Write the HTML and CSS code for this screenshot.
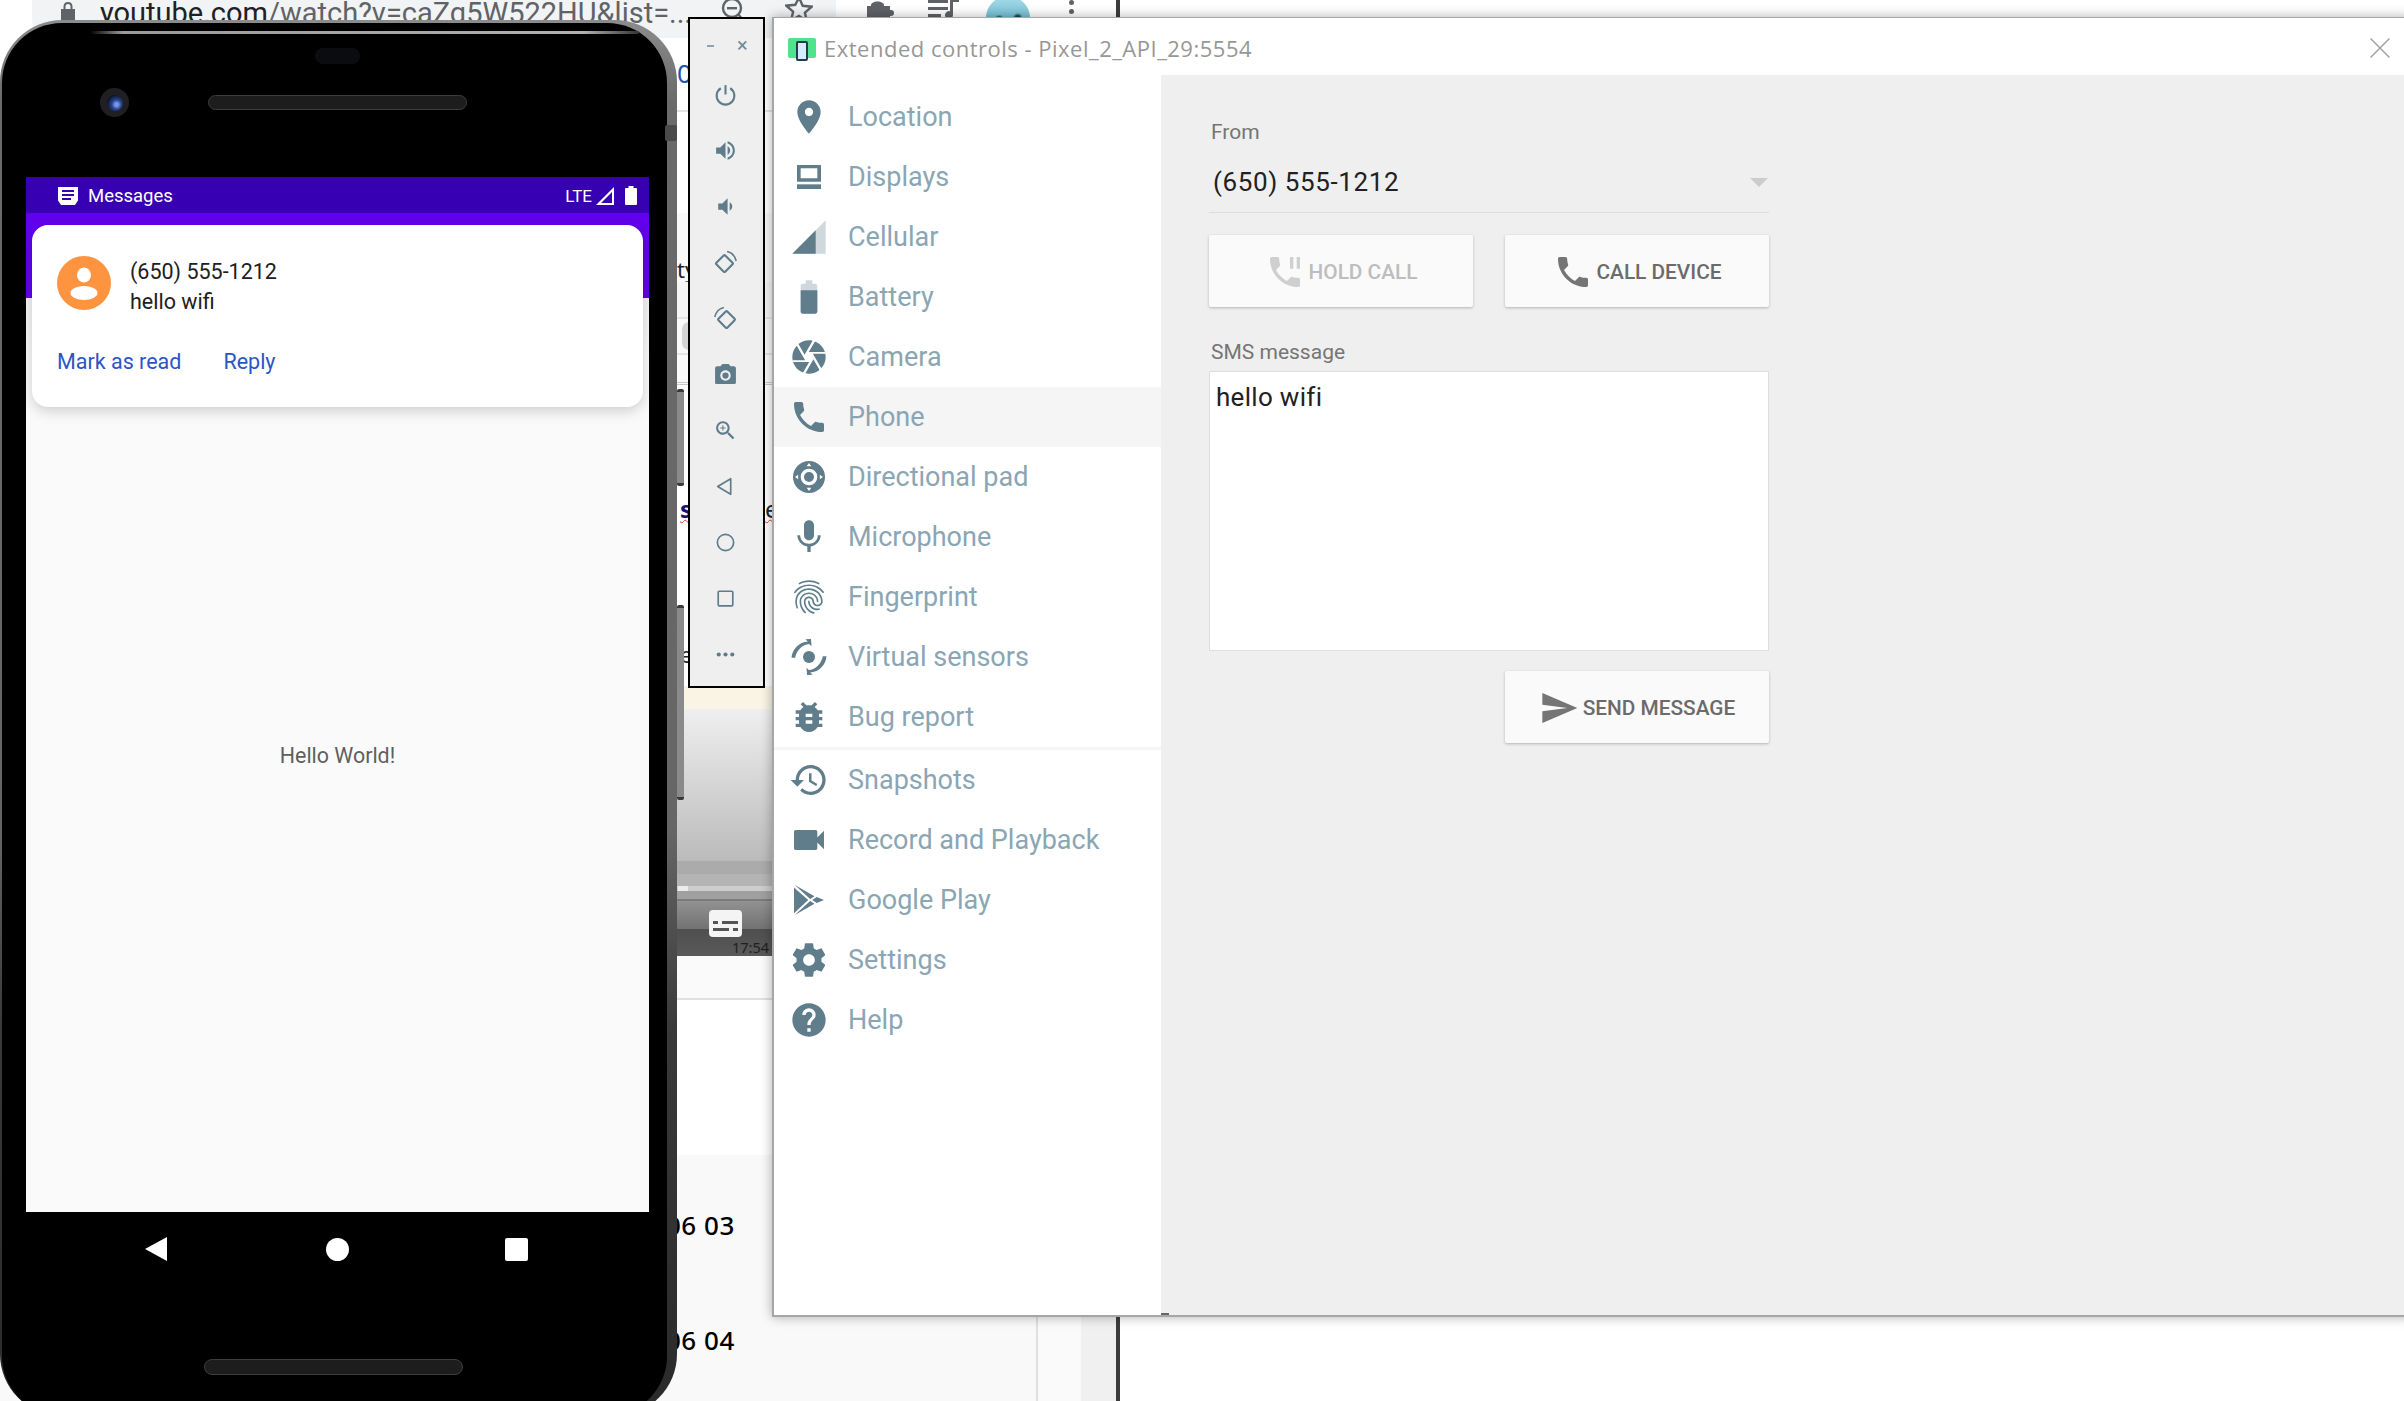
FILE: index.html
```html
<!DOCTYPE html>
<html lang="en">
<head>
<meta charset="utf-8">
<title>Extended controls</title>
<link rel="stylesheet" href="styles.css">
</head>
<body>
<div class="desktop">

  <div class="browser">
    <div class="browser-main">
      <div class="chrome">
        <div class="omnibox">
          <svg class="lock" viewBox="0 0 16 20"><path d="M8 0C5 0 3.500 2 3.500 4.500V7H1v13h14V7h-2.500V4.500C12.500 2 11 0 8 0zm0 2c1.600 0 2.500 1 2.500 2.500V7h-5V4.500C5.500 3 6.400 2 8 2z"/></svg>
          <span class="url"><b>youtube.com</b>/watch?v=caZg5W522HU&amp;list=...</span>
          <svg class="zoomout" viewBox="0 0 24 24"><circle cx="11" cy="9" r="9" fill="none" stroke="#5f6368" stroke-width="2.400"/><path d="M6 8h10v2.400H6z" fill="#5f6368"/><path d="M17 15l5 6" stroke="#5f6368" stroke-width="2.400"/></svg>
          <svg class="star" viewBox="0 0 28 26"><path d="M14 1.500l3.700 8.300 9 .9-6.800 6 2 8.800L14 20l-7.900 4.500 2-8.800-6.800-6 9-.9z" fill="none" stroke="#5f6368" stroke-width="2.400"/></svg>
        </div>
        <div class="ext-icons">
          <svg class="puzzle" viewBox="0 0 28 20"><path d="M0 6h4C3 0 18 0 17 6h6v4h1a3 3 0 0 1 0 6h-1v4H0z" fill="#5f6368"/></svg>
          <svg class="playlist" viewBox="0 0 32 20"><path d="M0 1h20v3H0zM0 8h20v3H0zM0 15h13v3H0zM22 0h9v3h-6v13a4 4 0 1 1-3-3.800z" fill="#5f6368"/></svg>
          <span class="avatar"></span>
          <span class="kebab"><i></i><i></i><i></i></span>
        </div>
      </div>

      <div class="page-row row-a"><span class="frag-blue">0.</span></div>
      <div class="page-row row-b"></div>
      <div class="page-row row-c"><span class="frag">ty</span></div>
      <div class="page-row row-d"></div>
      <div class="page-row row-e"><span class="chip"></span></div>
      <div class="page-row row-f"></div>
      <div class="page-row row-g"><span class="frag-spell">s</span><span class="frag-spell-b">e</span></div>
      <div class="page-row row-h"><span class="frag">e</span></div>
      <div class="page-row row-cream"></div>

      <div class="video">
        <div class="video-fade"></div>
        <div class="video-band-a"></div>
        <div class="video-band-b"></div>
        <div class="video-progress"><span></span></div>
        <div class="video-band-c"></div>
        <div class="video-controls">
          <span class="cc"><i class="cc-a"></i><i class="cc-b"></i><i class="cc-c"></i><i class="cc-d"></i></span>
          <span class="video-time">17:54</span>
        </div>
      </div>

      <div class="page-row row-i"></div>
      <div class="page-row row-j"></div>

      <div class="table">
        <div class="table-main">
          <div class="table-row">06 03</div>
          <div class="table-row">06 04</div>
        </div>
        <div class="table-side"></div>
      </div>
    </div>
    <div class="browser-edge"></div>
    <div class="browser-right"></div>
  </div>

  <div class="phone">
    <span class="phone-face"></span>
    <span class="phone-gloss"></span>
    <span class="side-btn side-a"></span>
    <span class="side-btn side-b"></span>
    <span class="side-btn side-c"></span>
    <div class="phone-top">
      <span class="sensor"></span>
      <div class="top-row">
        <span class="lens"><span class="lens-glass"></span></span>
        <span class="speaker"></span>
      </div>
    </div>
    <div class="screen">
      <div class="status">
        <div class="status-left">
          <svg class="status-app" viewBox="0 0 20 18"><path d="M0 0h20v13.500L17 18H3l-3-4.500zM4 3v2h12V3zm0 4v2h12V7zm0 4v2h9v-2z" fill="#fff" fill-rule="evenodd"/></svg>
          <span class="status-title">Messages</span>
        </div>
        <div class="status-right">
          <span class="lte">LTE</span>
          <svg class="status-signal" viewBox="0 0 18 18"><path d="M18 0v18H0zM16 5L5 16h11z" fill="#fff" fill-rule="evenodd"/></svg>
          <svg class="status-batt" viewBox="0 0 12 19"><path d="M3.500 0h5v2H11a1 1 0 0 1 1 1v15a1 1 0 0 1-1 1H1a1 1 0 0 1-1-1V3a1 1 0 0 1 1-1h2.500z" fill="#fff"/></svg>
        </div>
      </div>
      <div class="appbar"></div>
      <div class="screen-body">Hello World!</div>
      <div class="heads-up">
        <div class="hu-main">
          <svg class="hu-avatar" viewBox="0 0 54 54"><circle cx="27" cy="27" r="27" fill="#fe9340"/><ellipse cx="27" cy="19" rx="7" ry="7.500" fill="#fff"/><ellipse cx="27" cy="37" rx="13.500" ry="7" fill="#fff"/></svg>
          <div class="hu-text">
            <div class="hu-line">(650) 555-1212</div>
            <div class="hu-line">hello wifi</div>
          </div>
        </div>
        <div class="hu-actions"><span>Mark as read</span><span>Reply</span></div>
      </div>
    </div>
    <div class="navbar">
      <svg class="nav-back" viewBox="0 0 22 24"><path d="M22 0v24L0 12z" fill="#fff"/></svg>
      <span class="nav-home"></span>
      <span class="nav-recent"></span>
    </div>
    <span class="speaker speaker-bottom"></span>
  </div>

  <div class="toolbar">
    <div class="tb-head"><span class="tb-min"></span><span class="tb-close">×</span></div>
    <div class="tb-btn"><svg class="tb-icon" viewBox="0 0 24 24"><path d="M12 3v9" fill="none" stroke="#5f7c8a" stroke-width="2"/><path d="M7.500 6a8.500 8.500 0 1 0 9 0" fill="none" stroke="#5f7c8a" stroke-width="2"/></svg></div>
    <div class="tb-btn"><svg class="tb-icon" viewBox="0 0 24 24"><path d="M3 9v6h4l5 5V4L7 9H3zm13.500 3c0-1.770-1.020-3.290-2.500-4.030v8.050c1.480-.73 2.500-2.250 2.500-4.020zM14 3.230v2.060c2.890.86 5 3.540 5 6.710s-2.110 5.850-5 6.710v2.060c4.010-.91 7-4.490 7-8.770s-2.990-7.860-7-8.770z"/></svg></div>
    <div class="tb-btn"><svg class="tb-icon" viewBox="0 0 24 24"><path d="M18.500 12c0-1.770-1.020-3.290-2.500-4.030v8.050c1.480-.73 2.500-2.250 2.500-4.020zM5 9v6h4l5 5V4L9 9H5z"/></svg></div>
    <div class="tb-btn"><svg class="tb-icon" viewBox="0 0 24 24"><rect x="5" y="7" width="12" height="12" rx="1" transform="rotate(45 11 13)" fill="none" stroke="#5f7c8a" stroke-width="2"/><path d="M13.500 1.500c4 .8 7.600 4.400 8.800 9" fill="none" stroke="#5f7c8a" stroke-width="1.500"/></svg></div>
    <div class="tb-btn"><svg class="tb-icon" viewBox="0 0 24 24"><rect x="7" y="7" width="12" height="12" rx="1" transform="rotate(45 13 13)" fill="none" stroke="#5f7c8a" stroke-width="2"/><path d="M10.500 1.500c-4 .8-7.600 4.400-8.800 9" fill="none" stroke="#5f7c8a" stroke-width="1.500"/></svg></div>
    <div class="tb-btn"><svg class="tb-icon" viewBox="0 0 24 24"><path d="M9 2L7.170 4H4c-1.100 0-2 .9-2 2v14c0 1.100.9 1 2 1h16c1.100 0 2 .1 2-1V6c0-1.100-.9-2-2-2h-3.170L15 2H9zm3 16c-2.760 0-5-2.240-5-5s2.240-5 5-5 5 2.240 5 5-2.240 5-5 5z"/><circle cx="12" cy="13" r="3"/></svg></div>
    <div class="tb-btn"><svg class="tb-icon" viewBox="0 0 24 24"><path d="M15.500 14h-.79l-.28-.27C15.410 12.590 16 11.110 16 9.500 16 5.910 13.090 3 9.500 3S3 5.910 3 9.500 5.910 16 9.500 16c1.610 0 3.090-.59 4.230-1.570l.27.28v.79l5 4.990L20.490 19l-4.990-5zm-6 0C7.010 14 5 11.990 5 9.500S7.010 5 9.500 5 14 7.010 14 9.500 11.990 14 9.500 14zM12 10h-2v2H9v-2H7V9h2V7h1v2h2v1z"/></svg></div>
    <div class="tb-btn"><svg class="tb-icon" viewBox="0 0 24 24"><path d="M17 4.500v15L4.500 12z" fill="none" stroke="#5f7c8a" stroke-width="1.600" stroke-linejoin="round"/></svg></div>
    <div class="tb-btn"><svg class="tb-icon" viewBox="0 0 24 24"><circle cx="12" cy="12" r="7.800" fill="none" stroke="#5f7c8a" stroke-width="1.600"/></svg></div>
    <div class="tb-btn"><svg class="tb-icon" viewBox="0 0 24 24"><rect x="5" y="5" width="14" height="14" rx="1" fill="none" stroke="#5f7c8a" stroke-width="1.600"/></svg></div>
    <div class="tb-btn"><svg class="tb-icon" viewBox="0 0 24 24"><circle cx="5.500" cy="12" r="2"/><circle cx="12" cy="12" r="2"/><circle cx="18.500" cy="12" r="2"/></svg></div>
  </div>

  <div class="window">
    <div class="titlebar">
      <div class="title-left">
        <span class="logo"><span class="logo-phone"></span></span>
        <span class="title-text">Extended controls - Pixel_2_API_29:5554</span>
      </div>
      <svg class="title-close" viewBox="0 0 20 20"><path d="M.5.500l19 19M19.500.500l-19 19" stroke="#a3a3a3" stroke-width="1.500" fill="none"/></svg>
    </div>
    <div class="win-body">
      <nav class="menu">
        <div class="menu-item"><svg class="menu-icon" viewBox="0 0 24 24"><path d="M12 2C8.130 2 5 5.130 5 9c0 5.250 7 13 7 13s7-7.750 7-13c0-3.870-3.130-7-7-7zm0 9.500c-1.380 0-2.500-1.120-2.500-2.500s1.120-2.500 2.500-2.500 2.500 1.120 2.500 2.500-1.120 2.500-2.500 2.500z"/></svg><span>Location</span></div>
        <div class="menu-item"><svg class="menu-icon" viewBox="0 0 24 24"><path fill-rule="evenodd" d="M4.800 4.800h14.400v10H4.800zM7 6.800v6h10v-6z"/><path d="M4.800 16.400h14.400v2.800H4.800z"/></svg><span>Displays</span></div>
        <div class="menu-item"><svg class="menu-icon" viewBox="0 0 24 24"><path opacity=".3" d="M2 22h20V2z"/><path d="M16 8L2 22h14z"/></svg><span>Cellular</span></div>
        <div class="menu-item"><svg class="menu-icon" viewBox="0 0 24 24"><path opacity=".3" d="M15.670 4H14V2h-4v2H8.330C7.600 4 7 4.600 7 5.330v15.340C7 21.400 7.600 22 8.330 22h7.340c.73 0 1.330-.6 1.330-1.330V5.330C17 4.600 16.400 4 15.670 4z"/><path d="M7 8h10v12.670c0 .73-.6 1.330-1.330 1.330H8.330C7.600 22 7 21.400 7 20.670z"/></svg><span>Battery</span></div>
        <div class="menu-item"><svg class="menu-icon" viewBox="0 0 24 24"><path d="M9.400 10.500l4.770-8.260C13.470 2.090 12.750 2 12 2c-2.400 0-4.600.85-6.320 2.250l3.660 6.350.06-.1zM21.540 9c-.92-2.920-3.150-5.260-6-6.340L11.880 9h9.660zm.26 1h-7.490l.29.5 4.760 8.250C21 16.970 22 14.610 22 12c0-.69-.07-1.350-.2-2zM8.540 12l-3.900-6.750C3.010 7.030 2 9.390 2 12c0 .69.07 1.350.2 2h7.490l-1.150-2zm-6.080 3c.92 2.920 3.150 5.260 6 6.340L12.120 15H2.460zm11.270 0l-3.900 6.760c.7.15 1.420.24 2.170.24 2.400 0 4.600-.85 6.320-2.250l-3.660-6.350-.93 1.600z"/></svg><span>Camera</span></div>
        <div class="menu-item is-active"><svg class="menu-icon" viewBox="0 0 24 24"><path d="M6.620 10.790c1.440 2.830 3.760 5.140 6.590 6.590l2.200-2.200c.27-.27.67-.36 1.020-.24 1.120.37 2.330.57 3.570.57.55 0 1 .45 1 1V20c0 .55-.45 1-1 1-9.390 0-17-7.610-17-17 0-.55.45-1 1-1h3.500c.55 0 1 .45 1 1 0 1.250.2 2.450.57 3.570.11.350.03.740-.25 1.020l-2.200 2.200z"/></svg><span>Phone</span></div>
        <div class="menu-item"><svg class="menu-icon" viewBox="0 0 24 24"><circle cx="12" cy="12" r="9.600"/><circle cx="12" cy="12" r="5" fill="#fff"/><circle cx="12" cy="12" r="3"/><path fill="#fff" d="M12 3.600l1.400 1.900h-2.800zM12 20.400l-1.400-1.900h2.800zM3.600 12l1.900-1.400v2.800zM20.400 12l-1.900 1.400v-2.800z"/></svg><span>Directional pad</span></div>
        <div class="menu-item"><svg class="menu-icon" viewBox="0 0 24 24"><path d="M12 14c1.660 0 2.990-1.340 2.990-3L15 5c0-1.660-1.340-3-3-3S9 3.340 9 5v6c0 1.660 1.340 3 3 3zm5.300-3c0 3-2.540 5.100-5.300 5.100S6.700 14 6.700 11H5c0 3.410 2.720 6.230 6 6.720V21h2v-3.280c3.280-.48 6-3.300 6-6.720h-1.700z"/></svg><span>Microphone</span></div>
        <div class="menu-item"><svg class="menu-icon" viewBox="0 0 24 24"><path d="M17.810 4.470c-.08 0-.16-.02-.23-.06C15.660 3.420 14 3 12.010 3c-1.980 0-3.860.47-5.570 1.410-.24.130-.54.040-.68-.2-.13-.24-.04-.55.2-.68C7.820 2.520 9.860 2 12.010 2c2.130 0 3.990.47 6.030 1.520.25.130.34.430.21.670-.09.180-.26.280-.44.280zM3.500 9.720c-.1 0-.2-.03-.29-.09-.23-.16-.28-.47-.12-.7.990-1.400 2.250-2.500 3.750-3.270C9.980 4.040 14 4.030 17.150 5.650c1.500.77 2.760 1.860 3.750 3.250.16.220.11.540-.12.700-.23.160-.54.110-.7-.12-.9-1.260-2.040-2.250-3.390-2.940-2.870-1.470-6.540-1.470-9.400.01-1.360.7-2.500 1.700-3.400 2.960-.08.140-.23.210-.39.210zm6.250 12.070c-.13 0-.26-.05-.35-.15-.87-.87-1.340-1.430-2.010-2.640-.69-1.230-1.050-2.730-1.050-4.340 0-2.970 2.540-5.390 5.660-5.390s5.660 2.420 5.660 5.390c0 .28-.22.5-.5.5s-.5-.22-.5-.5c0-2.420-2.090-4.390-4.660-4.390-2.570 0-4.660 1.970-4.660 4.390 0 1.440.32 2.770.93 3.850.64 1.150 1.080 1.640 1.850 2.420.19.200.19.510 0 .71-.11.100-.24.150-.37.150zm7.170-1.850c-1.190 0-2.240-.3-3.100-.89-1.490-1.010-2.380-2.650-2.380-4.390 0-.28.220-.5.500-.5s.5.220.5.500c0 1.410.72 2.740 1.940 3.560.71.480 1.540.71 2.540.71.240 0 .64-.03 1.040-.1.270-.05.530.13.580.41.050.27-.13.530-.41.580-.57.110-1.070.12-1.210.12zM14.910 22c-.04 0-.09-.01-.13-.02-1.590-.44-2.630-1.030-3.720-2.100-1.400-1.390-2.170-3.240-2.170-5.220 0-1.620 1.380-2.940 3.080-2.940 1.700 0 3.080 1.320 3.080 2.940 0 1.070.93 1.940 2.080 1.940s2.080-.87 2.080-1.940c0-3.770-3.250-6.830-7.250-6.830-2.840 0-5.440 1.580-6.610 4.030-.39.810-.59 1.760-.59 2.800 0 .78.07 2.010.67 3.610.1.260-.03.550-.29.640-.26.100-.55-.04-.64-.29-.49-1.310-.73-2.610-.73-3.960 0-1.200.23-2.290.68-3.240 1.330-2.790 4.280-4.600 7.510-4.600 4.550 0 8.250 3.510 8.250 7.830 0 1.620-1.380 2.940-3.080 2.940s-3.080-1.320-3.080-2.940c0-1.070-.93-1.940-2.080-1.940s-2.080.87-2.080 1.940c0 1.710.66 3.310 1.870 4.510.95.940 1.860 1.460 3.270 1.850.27.070.42.350.35.610-.05.230-.26.380-.47.380z"/></svg><span>Fingerprint</span></div>
        <div class="menu-item"><svg class="menu-icon" viewBox="0 0 24 24"><circle cx="12" cy="12" r="3.600"/><path d="M1.500 12.500C1.800 7.500 6 3 11.300 2.700l-1.500-1.300 3.400-.2.300 4.300-1.400-1.300C8 4.500 4.600 8 3.700 12.500zM22.500 11.500c-.3 5-4.500 9.500-9.800 9.800l1.500 1.300-3.400.2-.3-4.300 1.400 1.300c4.100-.3 7.500-3.800 8.400-8.300z"/></svg><span>Virtual sensors</span></div>
        <div class="menu-item"><svg class="menu-icon" viewBox="0 0 24 24"><path d="M20 8h-2.810c-.45-.78-1.070-1.450-1.820-1.960L17 4.410 15.590 3l-2.170 2.170C12.960 5.060 12.490 5 12 5c-.49 0-.96.06-1.410.17L8.410 3 7 4.410l1.620 1.630C7.880 6.550 7.260 7.220 6.810 8H4v2h2.090c-.05.33-.09.66-.09 1v1H4v2h2v1c0 .34.04.67.09 1H4v2h2.810c1.040 1.790 2.970 3 5.190 3s4.150-1.210 5.190-3H20v-2h-2.090c.05-.33.09-.66.09-1v-1h2v-2h-2v-1c0-.34-.04-.67-.09-1H20V8zm-6 8h-4v-2h4v2zm0-4h-4v-2h4v2z"/></svg><span>Bug report</span></div>
        <div class="menu-divider"></div>
        <div class="menu-item"><svg class="menu-icon" viewBox="0 0 24 24"><path d="M13 3c-4.970 0-9 4.030-9 9H1l3.890 3.890.07.14L9 12H6c0-3.870 3.130-7 7-7s7 3.130 7 7-3.130 7-7 7c-1.930 0-3.680-.79-4.940-2.060l-1.420 1.420C8.270 19.990 10.510 21 13 21c4.970 0 9-4.030 9-9s-4.030-9-9-9zm-1 5v5l4.280 2.540.72-1.210-3.500-2.080V8H12z"/></svg><span>Snapshots</span></div>
        <div class="menu-item"><svg class="menu-icon" viewBox="0 0 24 24"><path d="M17 10.500V7c0-.55-.45-1-1-1H4c-.55 0-1 .45-1 1v10c0 .55.45 1 1 1h12c.55 0 1-.45 1-1v-3.500l4 4v-11l-4 4z"/></svg><span>Record and Playback</span></div>
        <div class="menu-item"><svg class="menu-icon" viewBox="0 0 24 24"><path d="M3 4.500L11.500 12 3 20zM3.500 3l11.800 6.800-2.600 1.600zM3.500 21l11.800-6.800-2.600-1.600zM16.600 10.200L21 12l-4.400 1.800L14 12z"/></svg><span>Google Play</span></div>
        <div class="menu-item"><svg class="menu-icon" viewBox="0 0 24 24"><path d="M19.430 12.980c.04-.32.07-.64.07-.98s-.03-.66-.07-.98l2.110-1.650c.19-.15.24-.42.12-.64l-2-3.460c-.12-.22-.39-.3-.61-.22l-2.490 1c-.52-.4-1.080-.73-1.690-.98l-.38-2.650C14.460 2.180 14.250 2 14 2h-4c-.25 0-.46.18-.49.42l-.38 2.650c-.61.25-1.170.59-1.690.98l-2.490-1c-.23-.09-.49 0-.61.22l-2 3.460c-.13.22-.07.49.12.64l2.110 1.650c-.04.32-.07.65-.07.98s.03.66.07.98l-2.110 1.650c-.19.15-.24.42-.12.64l2 3.460c.12.22.39.3.61.22l2.490-1c.52.4 1.080.73 1.690.98l.38 2.650c.03.24.24.42.49.42h4c.25 0 .46-.18.49-.42l.38-2.650c.61-.25 1.170-.59 1.690-.98l2.490 1c.23.09.49 0 .61-.22l2-3.460c.12-.22.07-.49-.12-.64l-2.110-1.650zM12 15.500c-1.930 0-3.500-1.570-3.500-3.500s1.570-3.500 3.500-3.500 3.500 1.570 3.500 3.500-1.570 3.500-3.500 3.500z"/></svg><span>Settings</span></div>
        <div class="menu-item"><svg class="menu-icon" viewBox="0 0 24 24"><path d="M12 2C6.480 2 2 6.480 2 12s4.480 10 10 10 10-4.480 10-10S17.520 2 12 2zm1 17h-2v-2h2v2zm2.070-7.750l-.9.920C13.450 12.900 13 13.500 13 15h-2v-.5c0-1.100.45-2.100 1.170-2.830l1.240-1.260c.37-.36.59-.86.59-1.410 0-1.100-.9-2-2-2s-2 .9-2 2H8c0-2.210 1.790-4 4-4s4 1.790 4 4c0 .88-.36 1.680-.93 2.250z"/></svg><span>Help</span></div>
      </nav>
      <main class="panel">
        <div class="form">
          <div class="field-label">From</div>
          <div class="select"><span>(650) 555-1212</span><span class="select-arrow"></span></div>
          <div class="btn-row">
            <div class="btn btn-disabled"><svg class="btn-icon" viewBox="0 0 24 24"><path d="M20 15.500c-1.250 0-2.450-.2-3.570-.57-.35-.11-.74-.03-1.020.24l-2.200 2.200c-2.830-1.440-5.150-3.750-6.590-6.590l2.200-2.200c.28-.27.36-.67.25-1.020C8.700 6.450 8.500 5.250 8.500 4c0-.55-.45-1-1-1H4c-.55 0-1 .45-1 1 0 9.390 7.610 17 17 17 .55 0 1-.45 1-1v-3.500c0-.55-.45-1-1-1zM19 3v7h2V3h-2zm-4 7h2V3h-2v7z"/></svg><span>HOLD CALL</span></div>
            <div class="btn"><svg class="btn-icon" viewBox="0 0 24 24"><path d="M6.620 10.790c1.440 2.830 3.760 5.140 6.590 6.590l2.200-2.200c.27-.27.67-.36 1.020-.24 1.120.37 2.330.57 3.570.57.55 0 1 .45 1 1V20c0 .55-.45 1-1 1-9.390 0-17-7.610-17-17 0-.55.45-1 1-1h3.500c.55 0 1 .45 1 1 0 1.250.2 2.450.57 3.570.11.350.03.740-.25 1.020l-2.200 2.200z"/></svg><span>CALL DEVICE</span></div>
          </div>
          <div class="field-label field-sms">SMS message</div>
          <div class="message">hello wifi</div>
          <div class="btn-row btn-row-end">
            <div class="btn"><svg class="btn-icon" viewBox="0 0 24 24"><path d="M2.010 21L23 12 2.010 3 2 10l15 2-15 2z"/></svg><span>SEND MESSAGE</span></div>
          </div>
        </div>
        <span class="grip"></span>
      </main>
    </div>
  </div>

</div>
</body>
</html>
```

FILE: styles.css
```css
* { box-sizing: border-box; }
html, body { margin: 0; padding: 0; height: 100%; overflow: hidden; background: #fff; }
body { font-family: Roboto, "Liberation Sans", sans-serif; }
.desktop { position: relative; width: 2404px; height: 1401px; overflow: hidden; }

/* Browser behind everything */
.browser { position: absolute; left: 0; top: 0; width: 2404px; height: 1401px; display: flex; background: #fff; }
.browser-main { width: 1116px; display: flex; flex-direction: column; background: #fff; }
.browser-edge { width: 4px; background: #3c3c3c; }
.browser-right { flex: 1; background: #fff; }
.chrome { height: 38px; display: flex; align-items: flex-start; padding-left: 32px; }
.omnibox { width: 804px; height: 38px; background: #f1f3f4; border-radius: 0 0 19px 19px; display: flex; align-items: flex-start; padding-left: 28px; position: relative; }
.lock { width: 16px; height: 20px; margin-top: 2px; fill: #5f6368; }
.url { margin-left: 24px; width: 583px; font: 400 29px/26px Roboto, sans-serif; color: #5f6368; white-space: nowrap; }
.url b { font-weight: 400; color: #202124; }
.zoomout { width: 24px; height: 24px; margin-left: 38px; margin-top: -1px; }
.star { width: 28px; height: 26px; margin-left: 40px; margin-top: -4px; }
.ext-icons { display: flex; align-items: flex-start; }
.puzzle { width: 28px; height: 20px; margin-left: 31px; }
.playlist { width: 32px; height: 20px; margin-left: 33px; margin-top: -1px; }
.avatar { width: 44px; height: 44px; border-radius: 50%; margin-left: 26px; margin-top: -4px; background: radial-gradient(circle at 30% 55%, #16333f 0 7%, transparent 14%), radial-gradient(circle at 72% 50%, #1c4454 0 6%, transparent 13%), linear-gradient(#a9dcea, #3fa2c2); }
.kebab { display: flex; flex-direction: column; gap: 4px; margin-left: 39px; }
.kebab i { width: 5px; height: 5px; border-radius: 50%; background: #5f6368; }

.page-row { flex: none; padding-left: 677px; font: 400 26px/1 "Noto Sans", sans-serif; color: #222; overflow: hidden; }
.row-a { height: 74px; border-bottom: 2px solid #e2e2e2; padding-top: 22px; }
.frag-blue { color: #1a56b0; }
.row-b { height: 101px; }
.row-c { height: 69px; background: #f9f9f9; padding-top: 42px; }
.frag { font-size: 22px; }
.row-d { height: 37px; background: #f5f5f5; border-bottom: 2px solid #e4e4e4; }
.row-e { height: 36px; background: #f9f9f9; border-bottom: 2px solid #e4e4e4; padding-left: 682px; padding-top: 3px; }
.chip { display: block; width: 14px; height: 28px; border-radius: 8px; background: #d4d4d4; }
.row-f { height: 30px; background: #fafafa; border-bottom: 3px double #c9c9c9; }
.row-g { height: 150px; padding-top: 112px; padding-left: 680px; white-space: nowrap; font-size: 24px; font-weight: 700; color: #12127a; }
.frag-spell { text-decoration: underline wavy #e33 1px; }
.frag-spell-b { margin-left: 73px; font-weight: 400; color: #222; text-decoration: underline wavy #e33 1px; }
.row-h { height: 151px; padding-top: 105px; padding-left: 680px; }
.row-cream { height: 23px; background: #f9f4e3; }

.video { flex: none; height: 247px; display: flex; flex-direction: column; }
.video-fade { height: 152px; background: linear-gradient(#efefef, #bbb); }
.video-band-a { height: 13px; background: #ababab; }
.video-band-b { height: 12px; background: #b4b4b4; }
.video-progress { height: 5px; background: #cdcdcd; padding-left: 678px; }
.video-progress span { display: block; width: 10px; height: 5px; background: #ececec; }
.video-band-c { height: 10px; background: #a0a0a0; border-bottom: 2px solid #7b7b7b; }
.video-controls { flex: 1; background: linear-gradient(#929292 0, #737373 50%, #4f4f4f 51%, #595959 100%); padding: 9px 0 0 709px; position: relative; }
.cc { display: block; position: relative; width: 33px; height: 27px; background: #f4f4f4; border-radius: 4px; }
.cc i { position: absolute; height: 3px; background: #555; }
.cc-a { left: 4px; top: 11px; width: 5px; }
.cc-b { left: 13px; top: 11px; width: 16px; }
.cc-c { left: 4px; top: 18px; width: 16px; }
.cc-d { left: 24px; top: 18px; width: 5px; }
.video-time { position: absolute; left: 732px; top: 37px; font: 400 14.500px/18px "Noto Sans", sans-serif; color: #1f1f1f; }

.row-i { height: 44px; background: #fafafa; border-bottom: 2px solid #e0e0e0; }
.row-j { height: 155px; }
.table { flex: 1; display: flex; background: #f9f9f9; }
.table-main { width: 1038px; border-right: 2px solid #e0e0e0; padding-top: 13px; padding-left: 666px; }
.table-row { height: 115px; font: 500 26px/115px "Noto Sans", sans-serif; color: #000; letter-spacing: .5px; white-space: nowrap; }
.table-side { flex: 1; background: linear-gradient(90deg, #fafafa 0 43px, #f0f0f0 43px); }

/* Phone */
.phone { position: absolute; left: 0; top: 20px; width: 677px; height: 1396px; border-radius: 62px; background: linear-gradient(#8c8c8c, #6a6a6a 6%, #666 58%, #3a3a3a 72%, #2a2a2a); display: flex; flex-direction: column; padding: 0 28px 0 26px; }
.phone-face { position: absolute; left: 2px; top: 3px; right: 10px; bottom: 0; border-radius: 60px; background: #000; }
.phone-gloss { position: absolute; left: 90px; right: 38px; top: 11px; height: 3px; border-radius: 2px; background: linear-gradient(90deg, #000, #9a9a9a 6%, #b0b0b0 90%, #333); }
.side-btn { position: absolute; background: #777; border-radius: 2px; }
.side-a { left: 665px; top: 105px; width: 12px; height: 16px; background: #4a4a4a; }
.side-b { left: 677px; top: 369px; width: 7px; height: 97px; background: #8a8a8a; border-top: 3px solid #3a3a3a; border-bottom: 3px solid #3a3a3a; }
.side-c { left: 677px; top: 585px; width: 7px; height: 195px; background: #8a8a8a; border-top: 3px solid #3a3a3a; border-bottom: 3px solid #3a3a3a; }
.phone-top { position: relative; height: 157px; flex: none; padding-top: 28px; display: flex; flex-direction: column; align-items: center; }
.sensor { width: 45px; height: 16px; border-radius: 8px; background: #0a0c10; }
.top-row { align-self: stretch; margin-top: 24px; display: flex; align-items: center; padding-left: 74px; }
.lens { width: 29px; height: 29px; border-radius: 50%; background: #202023; display: flex; align-items: center; justify-content: center; }
.lens-glass { width: 16px; height: 16px; border-radius: 50%; background: radial-gradient(circle at 60% 60%, #7a95e6 0 12%, #26458f 35%, #0a0f20 75%); }
.speaker { display: block; position: relative; width: 259px; height: 15px; margin-left: 79px; border-radius: 8px; background: #1d1d1d; border: 1px solid #3d3d3d; }
.screen { position: relative; flex: none; height: 1035px; background: #fafafa; display: flex; flex-direction: column; }
.status { height: 36px; flex: none; background: #3700b3; display: flex; justify-content: space-between; align-items: center; padding: 1px 12px 0 32px; color: #fff; }
.status-left, .status-right { display: flex; align-items: center; }
.status-app { width: 20px; height: 18px; }
.status-title { margin-left: 10px; font-size: 18.500px; }
.lte { font-size: 17px; }
.status-signal { width: 18px; height: 18px; margin-left: 4px; }
.status-batt { width: 12px; height: 19px; margin-left: 11px; }
.appbar { height: 85px; flex: none; background: #6200ee; }
.screen-body { flex: 1; display: flex; align-items: center; justify-content: center; font-size: 21.400px; color: #5f5f5f; background: linear-gradient(#f3f3f3, #fafafa 60px); }
.heads-up { position: absolute; left: 6px; top: 48px; width: 611px; height: 182px; background: #fff; border-radius: 16px; box-shadow: 0 4px 14px rgba(0,0,0,.18); padding: 31px 25px 0; display: flex; flex-direction: column; }
.hu-main { display: flex; align-items: flex-start; }
.hu-avatar { width: 54px; height: 54px; flex: none; }
.hu-text { margin: 1px 0 0 19px; }
.hu-line { font-size: 21.500px; line-height: 30px; color: #202020; }
.hu-actions { display: flex; gap: 42px; margin-top: 30px; font-size: 21.500px; line-height: 30px; color: #2a56c6; }
.navbar { position: relative; display: flex; align-items: center; height: 74px; flex: none; padding-left: 119px; }
.nav-back { width: 22px; height: 24px; }
.nav-home { width: 23px; height: 23px; border-radius: 50%; background: #fff; margin-left: 159px; }
.nav-recent { width: 23px; height: 23px; background: #fff; border-radius: 2px; margin-left: 156px; }
.speaker-bottom { margin: 73px 0 0 178px; flex: none; height: 16px; }

/* Emulator tool strip */
.toolbar { position: absolute; left: 688px; top: 17px; width: 77px; height: 671px; background: #efefef; border: 2px solid #000; display: flex; flex-direction: column; }
.tb-head { height: 47px; flex: none; display: flex; align-items: flex-start; padding: 14px 0 0 17px; color: #5f7c8a; }
.tb-min { width: 7px; height: 2px; background: #8ea3ae; margin-top: 12px; }
.tb-close { margin-left: 23px; font-size: 20px; line-height: 24px; color: #6f8a97; }
.tb-btn { height: 56px; flex: none; display: flex; align-items: center; justify-content: center; padding-right: 2px; }
.tb-icon { width: 25px; height: 25px; fill: #5f7c8a; }

/* Extended controls window */
.window { position: absolute; left: 772px; top: 17px; width: 1640px; height: 1300px; background: #fff; border: 1px solid #a6a6a6; border-width: 1px 1px 2px 2px; box-shadow: 0 0 11px rgba(0,0,0,.32); display: flex; flex-direction: column; }
.titlebar { height: 57px; flex: none; display: flex; align-items: center; justify-content: space-between; padding: 2px 21px 0 14px; }
.title-left { display: flex; align-items: center; }
.logo { display: block; width: 28px; height: 20px; border-radius: 2px; background: #4fe38d; padding: 3px 0 0 8px; }
.logo-phone { display: block; width: 12px; height: 20px; border: 2px solid #1e3c4d; border-radius: 2px; background: #d6ecfb; }
.title-text { margin-left: 8px; font: 400 22px/28px "Open Sans", sans-serif; letter-spacing: .5px; color: #979797; white-space: nowrap; }
.title-close { width: 20px; height: 20px; }
.win-body { flex: 1; display: flex; min-height: 0; }
.menu { width: 387px; flex: none; padding-top: 12px; background: #fff; }
.menu-item { display: flex; align-items: center; height: 60px; padding-left: 15px; font-size: 27px; color: #8aa5b3; }
.menu-item span { margin-left: 19px; }
.menu-item.is-active { background: #f5f5f5; }
.menu-icon { width: 40px; height: 40px; fill: #607d8b; flex: none; }
.menu-divider { height: 3px; background: #f5f5f5; }
.panel { flex: 1; position: relative; background: #efefef; padding: 47px 0 0 48px; }
.form { width: 560px; }
.field-label { font-size: 21px; line-height: 20px; color: #757575; padding-left: 2px; }
.field-sms { margin-top: 35px; }
.select { height: 71px; display: flex; justify-content: space-between; padding: 23px 1px 0 4px; font-size: 26px; letter-spacing: .6px; line-height: 34px; color: #212121; border-bottom: 1px solid #dcdcdc; }
.select-arrow { width: 0; height: 0; margin-top: 13px; border-style: solid; border-width: 9px 9px 0; border-color: #ccc transparent transparent; }
.btn-row { display: flex; gap: 32px; margin-top: 22px; }
.btn-row-end { justify-content: flex-end; margin-top: 20px; }
.btn { width: 264px; height: 72px; display: flex; align-items: center; justify-content: center; background: #fafafa; border-radius: 2px; box-shadow: 0 1px 3px rgba(0,0,0,.25); font-size: 20.800px; font-weight: 500; color: #6b6b6b; padding-top: 1px; }
.btn-icon { width: 40px; height: 40px; fill: #757575; margin-right: 4px; flex: none; }
.btn-disabled { color: #bdbdbd; }
.btn-disabled .btn-icon { fill: #cfcfcf; }
.message { height: 280px; margin-top: 9px; background: #fff; border: 1px solid #dedede; padding: 8px 6px; font-size: 26px; line-height: 34px; letter-spacing: .3px; color: #212121; }
.grip { position: absolute; left: 0; bottom: 0; width: 8px; height: 2px; background: #666; }
```
